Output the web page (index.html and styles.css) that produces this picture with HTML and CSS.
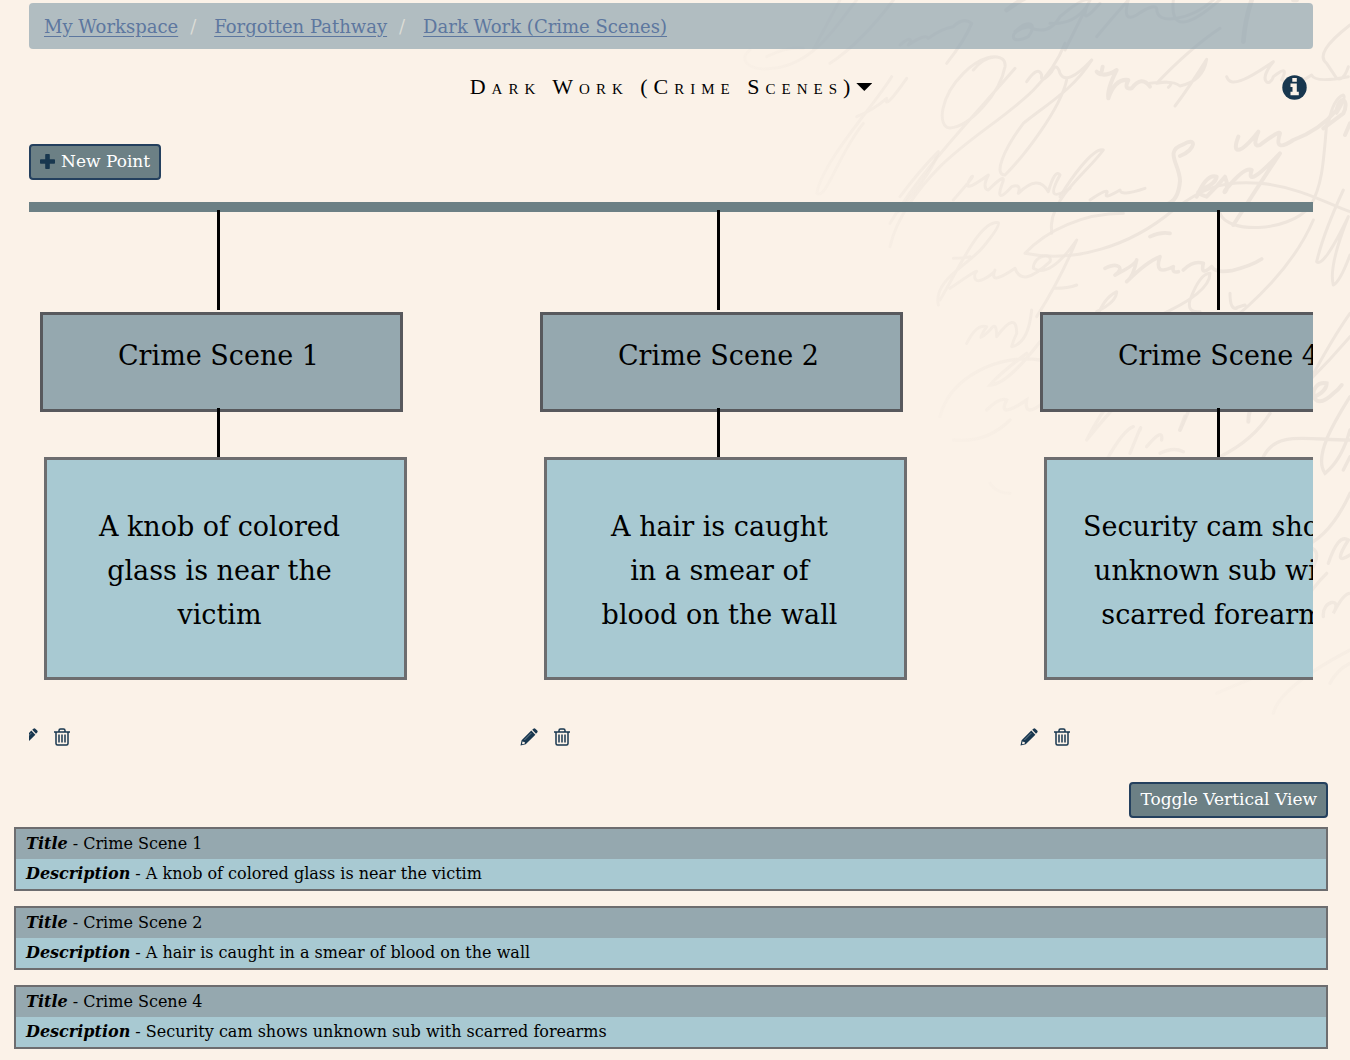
FILE: index.html
```html
<!DOCTYPE html>
<html lang="en">
<head>
  <meta charset="UTF-8">
  <meta name="viewport" content="width=device-width, initial-scale=1.0">
  <title>Dark Work (Crime Scenes)</title>
  <link rel="stylesheet" href="styles.css">
</head>

<body>

  <!-- faded handwriting in the top right corner -->
  <svg class="handwriting" viewBox="-480 0 1830 2250" aria-hidden="true">
    <defs>
      <linearGradient id="ink" gradientUnits="userSpaceOnUse" x1="-250" y1="1000" x2="600" y2="600">
        <stop offset="0" stop-color="#eee5dc" stop-opacity="0"/>
        <stop offset="1" stop-color="#eee5dc"/>
      </linearGradient>
      <linearGradient id="inkLow" gradientUnits="userSpaceOnUse" x1="300" y1="1750" x2="1100" y2="1150">
        <stop offset="0" stop-color="#eee5dc" stop-opacity="0"/>
        <stop offset="1" stop-color="#eee5dc"/>
      </linearGradient>
    </defs>
    <g fill="none" stroke="url(#ink)" stroke-width="9" stroke-linecap="round" stroke-linejoin="round">
      <path d="M-180 0Q-240 110-260 150M-20 0C-80 80-150 150-210 190M-450 150C-490 180-450 215-380 205C-250 190-180 60-130 0M-400 170q60-30 110-25"/>
      <path d="M-25 230C-80 320-230 480-250 580C-220 600-190 470-110 370M-130 350q50-20 90-55q-10 40 60-60M0 135c30-25 40-20 25 0q50-35 60-20q40-30 75-35q30-30 55-10q-20 50-75 120"/>
      <path stroke-width="14" d="M320 30Q360 0 385-10M1055 0q-20 60-25 125M1180 0h10"/>
      <path d="M345 95c40-40 70-25 40 15c-60 30-60-20 0-30q60 30 95-30q70-60 90-50q-40 80-75 150M450 70q70 5 110-50q-20 60 40-10M590 110q50-60 95-110q-20 70 25 45q50-35 60-20q0 40 60 30q60-10 110-55M820 0c-10 90 40 90 150-10"/>
      <path d="M220 210C260 160 320 160 315 200C300 280 210 380 150 384C110 380 120 290 190 220C240 170 290 160 310 180M345 205C230 340 70 500-30 670M495 130C430 300 250 370 120 500C60 560-10 650-30 740"/>
      <path d="M315 525C370 470 480 330 500 240M315 525C280 525 310 450 370 370C430 320 520 270 575 180"/>
      <path d="M380 245q35-50 45-20q-5 30 30-10q15-30 25 5q20 40 95-40"/>
      <path stroke-width="12" d="M608 200c-5 30-10 25-18 15q20 20 60-5q-30 60-25 85q20-60 60-55q-15 30 10 25q30-40 55-5"/>
      <path d="M750 250q70-10 90 8q70-15 80-80q-50 80-95 140M960 85q-90 60-190 165q60-10 35 12"/>
      <path d="M980 230c10 35 60 10 140-45c-50 60-10 80 0 45q50-40 25 10q40 20 90-15q10 25 110 5M1350 75q-110 85-70 115q20 30 30 45q20 10 35-35"/>
      <path stroke-width="12" d="M1015 410c-20 50 0 60 60-15q-20 50 5 40q60-45 60-35q-20 60 40 20q80-30 130-90c10-50 40-30 20 10q-40 30-60 45M1350 370l-15 35"/>
      <path d="M1280 370C1270 500 1265 560 1230 620C1160 700 980 700 960 640M1310 340q30-50 20-55q-30 10-45 85"/>
      <path stroke-width="12" d="M840 468c50-20 50-60 10-35c-60 20-10 60-10 110q-5 60-40 70M890 590q30-70 60-60c-5 40-100 40-30 60q30-30 55-60c20 50-20 60 10 30q50-60 70-50q-20 60 85-50q-60 90-140 215"/>
      <path d="M455 700C440 600 560 520 610 450C580 440 510 540 480 590M570 600q60-40 50-20q-10 20 40-10q0 20 75-5"/>
      <path d="M0 590q60-80 115-135q-10 50-120 180M160 600q70-80 55-70q-40 60 50-5q-20 40 0 45q60-60 40-15q-20 60 30 5q30-10 20 20q60-60 90-5q20-70 35-50q-50 90 30 40"/>
      <path d="M670 640C550 640 440 690 375 760C520 790 690 740 820 630C900 570 960 540 1080 550C1200 560 1300 620 1350 635"/>
      <path d="M115 915C100 840 200 800 250 740Q300 680 295 668C240 660 180 800 120 900M160 775q30 0 50-5M150 865q100-70 75-45c-10 50 60 0 60-10q-20 50 60-5q20 60 105-20c10-30-50-20-50 20q50 30 130-85q-50 120-120 230M465 865q40 0 65-10"/>
      <path stroke-width="11" d="M750 710q30-15 60-10M615 805c40-20 60 0 30 20q60-30 65-45q-10 50-30 65q60-60 100-75q-20 60 40 30q-5 20 15 15M850 810q30-30 60-20q-10 40 25 10M935 800q10 20 60 12q60-15 90-35"/>
      <path d="M770 950q160-70 160-130q-30 0-60 80q-10 40 30 35M590 935q60-30 60-60q-40 20-60 80M990 880q0 50 20 45q-10 0 25-10M1240 660C1180 800 1060 910 960 990M1330 570q-60 130-80 215q20 20 95-135q-60 150-45 205q20-10 50-90M1350 940q-50 70-120 200q60-60 120-130"/>
      <path d="M200 1030q30-60 60-50q-40 60 10 10q20-30 20 20q60-80 60-10q-10 20-15 40q50-10 60-110"/>
    </g>
    <g fill="none" stroke="url(#inkLow)" stroke-width="10" stroke-linecap="round">
      <path d="M120 1250C150 1130 300 1060 420 1080M380 1060q-80 60-110 95q50 0 150-130M160 1320q100 10 170-60M260 1230q40-40 60-30q-30 60 60 0q-10 60 60 0"/>
      <path d="M560 1320q120-150 170-170M650 1180q-50 60-90 140M620 1380q50-90 80-100M690 1360q40-100 30-70M740 1340q50-60 45-20M840 1290q20-40 30-70M780 1360q40-20 70-5M330 1480q-40 0-60-30"/>
      <path stroke-width="12" d="M840 1290l15-40M1045 1265q0-40 20-55M1110 1230q40-30 70-60q-10 50 40 30q60-20 60-50c-60-10-50 100 20 30q15-10 25-25"/>
      <path d="M960 1370q100-50 150-130M1090 1370C1130 1290 1220 1320 1350 1320M1350 1190c-50 80-110 180-75 230q50-40 75-130M1330 1410q15-30 20-40"/>
      <path d="M1350 1480q-60 130-140 160q60 0 30 60M1285 1690q30-90 60-70q-50 80 5 45M1200 1820q40-60 80-100M1270 1850c-5-50 60-60 30-10q30-60 50-60"/>
      <path opacity=".5" d="M950 2080q180-80 260-90M1120 2140q20-80 230-190M1290 2050q20-40 60-60"/>
    </g>
  </svg>

  <!-- icons used more than once -->
  <svg class="sprite" aria-hidden="true">
    <symbol id="pencil" viewBox="0 0 18 18">
      <path fill="#18374f" fill-rule="evenodd" d="M12.200 1.800 13.400.7q1-.8 1.900 0l1.900 1.900q.9.900 0 1.900l-1.200 1.200zM11.300 2.600l4.100 4.100L5.700 16.200.5 17.500 1.600 12.200zM2.600 13.300 2 15.500l.7.700 2.200-.6-.2-1.700-1.700-.2z"/>
      <path fill="none" stroke="#8496a0" stroke-width=".8" d="M4.400 12 11.400 5"/>
    </symbol>
    <symbol id="trash" viewBox="0 0 16 18">
      <path fill="none" stroke="#18374f" stroke-width="1.500" d="M0 4h16M5 4V2.500Q5 1 6.500 1h3Q11 1 11 2.500V4M2 4v11.500Q2 17 3.500 17h9q1.500 0 1.500-1.500V4M5 6.500v8M8 6.500v8M11 6.500v8"/>
    </symbol>
  </svg>

<div class="page">

  <div class="workspace">
    <nav class="breadcrumb" aria-label="breadcrumb">
      <a href="#">My Workspace</a>
      <span class="slash">/</span>
      <a href="#">Forgotten Pathway</a>
      <span class="slash">/</span>
      <a href="#">Dark Work (Crime Scenes)</a>
    </nav>

    <header class="heading">
      <h1>Dark Work (Crime Scenes)</h1>
      <button class="caret" aria-label="Choose timeline"></button>
      <button class="icon-btn info" aria-label="Info">
        <svg width="25" height="25" viewBox="0 0 25 25">
          <circle cx="12.500" cy="12.500" r="12.200" fill="#18374f"/>
          <path fill="#fbf2e8" d="M10.300 3h4.500v3.700h-4.500zM8.500 8.500h6.300v8.300h2v3.400H8.500v-3.400h2v-4.900h-2z"/>
        </svg>
      </button>
    </header>

    <button class="btn">
      <svg width="15" height="15" viewBox="0 0 15 15" aria-hidden="true">
        <path fill="#18374f" d="M6 0h3q.8 0 .8.800v4.400h4.400q.8 0 .8.800v3q0 .8-.8.800H9.800v4.400q0 .8-.8.800H6q-.8 0-.8-.8V9.800H.8Q0 9.800 0 9V6q0-.8.800-.8h4.400V.8Q5.200 0 6 0z"/>
      </svg>
      New Point
    </button>

    <section class="timeline">
      <ol class="points">
        <li class="point">
          <div class="stem"></div>
          <h2 class="point-title">Crime Scene 1</h2>
          <div class="stem short"></div>
          <p class="point-text">A knob of colored<br>glass is near the<br>victim</p>
          <div class="tools">
            <button class="icon-btn" aria-label="Edit"><svg width="18" height="18"><use href="#pencil"/></svg></button>
            <button class="icon-btn" aria-label="Delete"><svg width="16" height="18"><use href="#trash"/></svg></button>
          </div>
        </li>
        <li class="point">
          <div class="stem"></div>
          <h2 class="point-title">Crime Scene 2</h2>
          <div class="stem short"></div>
          <p class="point-text">A hair is caught<br>in a smear of<br>blood on the wall</p>
          <div class="tools">
            <button class="icon-btn" aria-label="Edit"><svg width="18" height="18"><use href="#pencil"/></svg></button>
            <button class="icon-btn" aria-label="Delete"><svg width="16" height="18"><use href="#trash"/></svg></button>
          </div>
        </li>
        <li class="point">
          <div class="stem"></div>
          <h2 class="point-title">Crime Scene 4</h2>
          <div class="stem short"></div>
          <p class="point-text">Security cam shows<br>unknown sub with<br>scarred forearms</p>
          <div class="tools">
            <button class="icon-btn" aria-label="Edit"><svg width="18" height="18"><use href="#pencil"/></svg></button>
            <button class="icon-btn" aria-label="Delete"><svg width="16" height="18"><use href="#trash"/></svg></button>
          </div>
        </li>
      </ol>
    </section>
  </div>

  <div class="toggle-row">
    <button class="btn">Toggle Vertical View</button>
  </div>

  <section class="list">
    <article class="entry">
      <p class="entry-title"><em>Title</em> - Crime Scene 1</p>
      <p class="entry-text"><em>Description</em> - A knob of colored glass is near the victim</p>
    </article>
    <article class="entry">
      <p class="entry-title"><em>Title</em> - Crime Scene 2</p>
      <p class="entry-text"><em>Description</em> - A hair is caught in a smear of blood on the wall</p>
    </article>
    <article class="entry">
      <p class="entry-title"><em>Title</em> - Crime Scene 4</p>
      <p class="entry-text"><em>Description</em> - Security cam shows unknown sub with scarred forearms</p>
    </article>
  </section>

</div>

</body>
</html>
```
FILE: styles.css
```css
* {
    box-sizing: border-box;
}

body {
    margin: 0;
    background: #fbf2e8;
    color: #000;
    font-family: Rockwell, "DejaVu Serif", serif;
    font-size: 16px;
    position: relative;
    overflow-x: hidden;
}

h1, h2, p, ol {
    margin: 0;
    padding: 0;
    font-weight: normal;
}

button {
    font-family: inherit;
    cursor: pointer;
}

svg {
    display: block;
}

.handwriting {
    position: absolute;
    top: 0;
    right: 0;
    width: 610px;
    height: 750px;
    z-index: -1;
}

.sprite {
    display: none;
}

.page {
    padding: 3px 22px 11px 14px;
}

.workspace {
    padding: 0 15px;
}

/* breadcrumb */
.breadcrumb {
    display: flex;
    align-items: center;
    height: 46px;
    padding: 0 15px;
    border-radius: 4px;
    background: rgba(137, 160, 172, 0.65);
    font-size: 18px;
}

.breadcrumb a {
    color: #5d779f;
    text-underline-offset: 3px;
}

.slash {
    width: 36px;
    padding-left: 12px;
    color: #dcdcd6;
}

/* page heading */
.heading {
    display: flex;
    align-items: center;
    justify-content: center;
    height: 76px;
    position: relative;
}

.heading h1 {
    font-family: "Trajan Pro", "Liberation Serif", serif;
    font-size: 22px;
    font-variant: small-caps;
    letter-spacing: 6px;
}

.caret {
    width: 16px;
    height: 8px;
    padding: 0;
    border: 0;
    background: #000;
    clip-path: polygon(0 0, 100% 0, 50% 100%);
}

.icon-btn {
    padding: 0;
    border: 0;
    background: none;
}

.info {
    position: absolute;
    right: 6px;
}

.btn {
    display: flex;
    align-items: center;
    gap: 6px;
    height: 36px;
    padding: 0 9px 2px;
    border: 2px solid #24405e;
    border-radius: 4px;
    background: #6c8085;
    color: #fff;
    font-size: 17px;
}

.workspace .btn {
    margin-top: 19px;
}

/* timeline */
.timeline {
    margin-top: 22px;
    border-top: 10px solid #6c8085;
}

.points {
    display: flex;
    margin-top: -2px;
    overflow-x: auto;
    scrollbar-width: none;
    list-style: none;
    position: relative;
}

.point {
    flex: 0 0 500px;
}

.point:first-child {
    margin-left: -10px;
}

.stem {
    width: 3px;
    height: 100px;
    margin-left: 198px;
    background: #000;
}

.stem.short {
    height: 49px;
    margin-top: -4px;
    position: relative;
}

.point-title,
.point-text {
    display: flex;
    align-items: center;
    justify-content: center;
    width: 363px;
    font-size: 27px;
    line-height: 44px;
    text-align: center;
}

.point-title {
    height: 100px;
    margin: 2px 0 0 21px;
    padding: 0 6px 12px 0;
    border: 3px solid #58595d;
    background: #95a8af;
}

.point-text {
    height: 223px;
    margin-left: 25px;
    padding: 4px 12px 0 0;
    border: 3px solid #6d6d6f;
    background: #a8c9d2;
}

.tools {
    display: flex;
    gap: 16px;
    margin: 48px 0 0 1px;
}

.toggle-row {
    display: flex;
    justify-content: flex-end;
    margin: 36px 0 9px;
}

/* vertical list */
.entry {
    margin-bottom: 15px;
    border: 2px solid #6d6d6f;
    font-size: 16px;
    line-height: 30px;
}

.entry:last-child {
    margin-bottom: 0;
}

.entry p {
    padding-left: 10px;
}

.entry em {
    font-weight: bold;
}

.entry-title {
    background: #95a8af;
}

.entry-text {
    background: #a8c9d2;
}
```
